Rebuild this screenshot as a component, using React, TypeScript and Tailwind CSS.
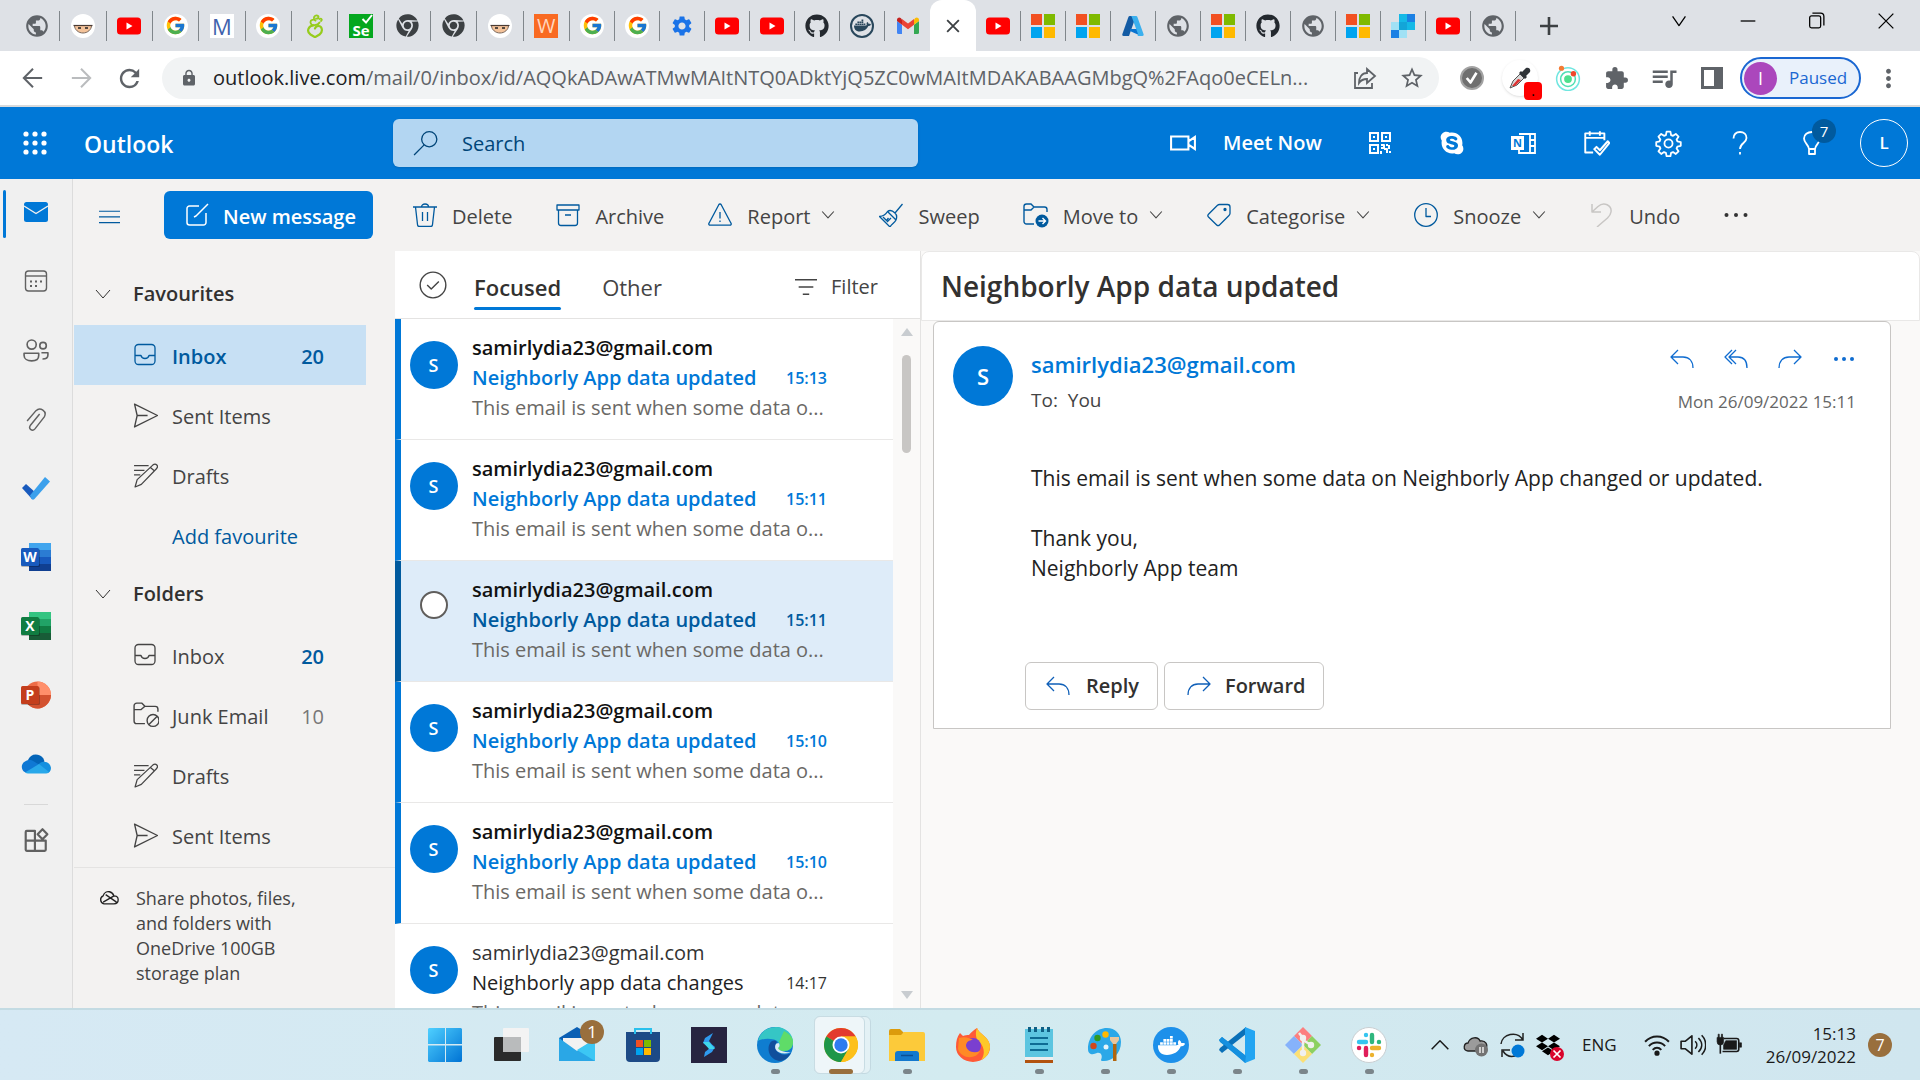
import React from "react";
import { FcGoogle } from "react-icons/fc";
import { FaChrome, FaGithub, FaDocker, FaDropbox, FaSkype } from "react-icons/fa";
import { MdPublic, MdLock, MdSettings, MdExtension, MdQueueMusic, MdMoreVert, MdStarBorder, MdRefresh } from "react-icons/md";

type IconProps = { children: React.ReactNode; className?: string; width?: number };

function Line({ children, className = "size-6", width = 1.2 }: IconProps) {
  return (
    <svg viewBox="0 0 24 24" className={"shrink-0 " + className} fill="none" stroke="currentColor" strokeWidth={width} strokeLinejoin="round" aria-hidden="true">
      {children}
    </svg>
  );
}

/* ---------- favicons ---------- */

const Globe = () => <MdPublic className="size-[26px] text-[#5f6368]" />;

const Ninja = () => (
  <svg viewBox="0 0 24 24" className="size-6">
    <circle cx="12" cy="12" r="12" fill="#fff" />
    <path d="M3.500 11.500h17c0 4.200-4 7.500-8.500 7.500s-8.500-3.300-8.500-7.500z" fill="#f4c39a" stroke="#6b5a50" strokeWidth=".9" />
    <path d="M2.500 11.500h19" stroke="#4a3b33" strokeWidth="1.200" />
    <path d="M7 14h3M14 14h3" stroke="#222" strokeWidth="1.400" />
  </svg>
);

const YouTube = () => (
  <svg viewBox="0 0 24 24" className="size-6">
    <rect y="3.500" width="24" height="17" rx="3.500" fill="#f00" />
    <path d="M9.500 8.500v7l6-3.500z" fill="#fff" />
  </svg>
);

const Google = () => (
  <span className="flex size-6 items-center justify-center rounded-full bg-white">
    <FcGoogle className="size-[21px]" />
  </span>
);

const Sprout = () => (
  <svg viewBox="0 0 24 24" className="size-6" fill="none" stroke="#96cc1c" strokeWidth="2.200" strokeLinecap="round">
    <path d="M10.500 11.500c-5 0-7.500 6-3 9l4.500 2.700 4.500-2.700c4-3 2.500-8.500-1-8.500-2 0-3 1-3.500 2.500" />
    <path d="M16.500 8.500c-1.500 3-8.500 4-9 0-.4-3 3.500-3.500 5-2M11 4.500c-.5-2.500 2.500-4 4-2.500s-.5 3-2 2.500M16.500 5c2-1 3 .8 1.500 2" strokeWidth="1.800" />
  </svg>
);

const Selenium = () => (
  <span className="relative flex size-6 items-end justify-center bg-[#04a71f] font-['Open_Sans',sans-serif] text-[15px] leading-[15px] font-bold text-white">
    Se
    <svg viewBox="0 0 12 10" className="absolute top-0 right-0 h-2.5 w-3">
      <path d="M1.500 5l3.500 3.500L11 1" fill="none" stroke="#fff" strokeWidth="2" />
    </svg>
  </span>
);

const ChromeGrey = () => <FaChrome className="size-[23px] text-[#3c4043]" />;

const LetterM = () => <span className="flex size-6 items-center justify-center bg-white font-['Open_Sans',sans-serif] text-[22px] leading-6 text-[#3f62ad]">M</span>;
const LetterW = () => <span className="flex size-6 items-center justify-center bg-[#f96a22] font-['Open_Sans',sans-serif] text-[20px] leading-6 text-[#ffd7bf]">W</span>;

const Gear = () => <MdSettings className="size-6 text-[#1a73e8]" />;
const GitHub = () => <FaGithub className="size-6 text-[#24292f]" />;

const DockerRound = () => (
  <span className="flex size-6 items-center justify-center rounded-full border-2 border-[#29475c] text-[#29475c]">
    <FaDocker className="size-[17px]" />
  </span>
);

const Gmail = () => (
  <svg viewBox="0 0 24 24" className="size-6">
    <path d="M1 7l5 3.800V20H2.500A1.500 1.500 0 0 1 1 18.500z" fill="#4285f4" />
    <path d="M23 7l-5 3.800V20h3.500a1.500 1.500 0 0 0 1.500-1.500z" fill="#34a853" />
    <path d="M18 5.500v5.300L23 7V5.800c0-2-2.200-3-3.700-1.800z" fill="#fbbc04" />
    <path d="M6 5.500v5.300L1 7V5.800c0-2 2.200-3 3.700-1.800z" fill="#c5221f" />
    <path d="M6 10.800V5l6 4.500L18 5v5.800l-6 4.500z" fill="#ea4335" />
  </svg>
);

const Microsoft = () => (
  <span className="grid size-6 grid-cols-2 gap-0.5">
    <i className="bg-[#f25022]" />
    <i className="bg-[#7fba00]" />
    <i className="bg-[#00a4ef]" />
    <i className="bg-[#ffb900]" />
  </span>
);

const Azure = () => (
  <svg viewBox="0 0 24 24" className="size-6">
    <path d="M8.500 2h6.500L8 22H2.500c-1 0-1.500-.8-1.200-1.700L7.500 2.800z" fill="#135ba4" />
    <path d="M9 15h9l2 7-11-5z" fill="#0a73cf" />
    <path d="M9.500 2h5.600c.6 0 1 .3 1.200.8l6.300 17.500c.3.900-.3 1.700-1.200 1.700H16c.9 0 1.400-.8 1.100-1.700L10.700 2.800A1.200 1.200 0 0 0 9.500 2z" fill="#3bb0ee" />
  </svg>
);

const Pixels = () => (
  <svg viewBox="0 0 24 24" className="size-6">
    <path d="M8 0h8v8H8z" fill="#15b9e6" />
    <path d="M16 0h8v8h-8zM0 16h8v8H0z" fill="#1b80e4" />
    <path d="M0 8h8v8H0zM8 16h8v8H8z" fill="#a0e1f5" />
    <path d="M8 8h8v8H8z" fill="#13a5d8" />
    <path d="M16 8h8v8h-8z" fill="#15b9e6" />
  </svg>
);

const leadTabs = [Globe, Ninja, YouTube, Google, LetterM, Google, Sprout, Selenium, ChromeGrey, ChromeGrey, Ninja, LetterW];
const midTabs = [Google, Google, Gear, YouTube, YouTube, GitHub, DockerRound, Gmail];
const endTabs = [YouTube, Microsoft, Microsoft, Azure, Globe, Microsoft, GitHub, Globe, Microsoft, Pixels, YouTube, Globe];

function Tab({ Icon, wide, bare }: { Icon: React.ComponentType; wide?: boolean; bare?: boolean }) {
  return (
    <button aria-label="Tab" className={"flex h-[30px] items-center justify-center " + (wide ? "flex-1 " : "w-[45px] ") + (bare ? "" : "border-r border-[#80868b]")}>
      <Icon />
    </button>
  );
}

function TabStrip() {
  return (
    <div className="flex h-[51px] shrink-0 items-center bg-[#dee1e6] pl-3.5">
      <div className="flex w-[556px]">
        {leadTabs.map((I, i) => <Tab key={i} Icon={I} wide />)}
      </div>
      {midTabs.map((I, i) => <Tab key={i} Icon={I} bare={i === 7} />)}
      <button aria-label="Close tab" className="flex h-full w-[46px] items-center justify-center rounded-t-xl bg-white text-[#3c4043]">
        <Line className="size-5" width={2.2}><path d="M5 5l14 14M19 5L5 19" /></Line>
      </button>
      {endTabs.map((I, i) => <Tab key={i} Icon={I} />)}
      <button aria-label="New tab" className="flex w-[66px] justify-center text-[#3c4043]">
        <Line className="size-6" width={2.6}><path d="M12 3v18M3 12h18" /></Line>
      </button>
      <div className="ml-auto flex self-start pt-2.5 text-black">
        {[
          <path key="c" d="M5 7l7 10 7-10" />,
          <path key="m" d="M4 12h16" />,
          <path key="r" d="M4 8.500a2 2 0 0 1 2-2h8a2 2 0 0 1 2 2v9a2 2 0 0 1-2 2H6a2 2 0 0 1-2-2zM7 3.500h9a3.500 3.500 0 0 1 3.500 3.500v10" />,
          <path key="x" d="M4 4l16 16M20 4L4 20" />,
        ].map((p, i) => (
          <button key={i} aria-label={["Search tabs", "Minimise", "Restore", "Close window"][i]} className="flex w-[69px] justify-center">
            <Line className="size-[22px]" width={1.4}>{p}</Line>
          </button>
        ))}
      </div>
    </div>
  );
}

function AddressBar() {
  return (
    <div className="flex h-14 shrink-0 items-center border-b-2 border-[#d8dadc] bg-white pl-[9px] text-[#5f6368]">
      <button aria-label="Back" className="flex w-12 justify-center"><Line className="size-[22px]" width={2.200}><path d="M22 12H3M12 2L2 12l10 10" strokeLinejoin="miter" /></Line></button>
      <button aria-label="Forward" className="flex w-12 justify-center text-[#babcbe]"><Line className="size-[22px]" width={2.200}><path d="M2 12h19M12 2l10 10-10 10" strokeLinejoin="miter" /></Line></button>
      <button aria-label="Reload" className="flex w-12 justify-center"><MdRefresh className="size-[29px]" /></button>
      <div className="ml-[9px] flex h-[42px] min-w-0 flex-1 items-center rounded-full bg-[#f1f3f4] pr-3.5 pl-[18px]">
        <MdLock className="size-[18px] shrink-0" />
        <div role="textbox" aria-label="Address" className="ml-[15px] min-w-0 flex-1 text-[20px] whitespace-nowrap">
          <span className="text-[#202124]">outlook.live.com</span>/mail/0/inbox/id/AQQkADAwATMwMAItNTQ0ADktYjQ5ZC0wMAItMDAKABAAGMbgQ%2FAqo0eCELn...
        </div>
        <button aria-label="Share" className="mr-[22px]">
          <Line width={1.800}><path d="M5 7H2v15h17v-5M14 3l8 7-8 7v-4c-4 0-6 1-8 4 0-6 3-10 8-10z" strokeLinejoin="miter" /></Line>
        </button>
        <button aria-label="Bookmark"><MdStarBorder className="size-[26px]" /></button>
      </div>
      <div className="flex items-center pl-[9px]">
        <button aria-label="Checker" className="flex w-12 justify-center">
          <span className="flex size-6 items-center justify-center rounded-full border-2 border-[#a3a3a3] bg-[#6f6f6f] text-white"><Line className="size-[18px]" width={3.500}><path d="M5 12l5 6 8-13" /></Line></span>
        </button>
        <button aria-label="Colour picker" className="relative flex size-12 items-center justify-center">
          <span className="flex size-9 items-center justify-center rounded-full bg-white shadow">
            <svg viewBox="0 0 24 24" className="size-6"><path d="M2 22l3-7 7-7 4 4-7 7z" fill="#d8d8d8" stroke="#555" /><path d="M4 20l6-7 3 1-6 6z" fill="#d33" /><path d="M11 7l6 6 2-2-1-1 4-4c1-3-1-5-4-4l-4 4-1-1z" fill="#2f3337" /></svg>
          </span>
          <span className="absolute right-0.5 bottom-0.5 flex size-[18px] items-center justify-center rounded-sm bg-[#f00] text-[14px] leading-none text-black">.</span>
        </button>
        <button aria-label="Orbit" className="flex w-12 justify-center">
          <svg viewBox="0 0 24 24" className="size-[26px]" fill="none" stroke="#4fdfb4" strokeWidth="1.400"><circle cx="12" cy="13" r="10.500" stroke="#70e6e0" /><circle cx="12" cy="13" r="6.800" /><circle cx="12" cy="13" r="3.600" fill="#4ee08e" stroke="none" /><circle cx="6" cy="3" r="2.400" fill="#f47b35" stroke="none" /><circle cx="17" cy="8" r="2.500" fill="#f0482c" stroke="none" /></svg>
        </button>
        <button aria-label="Extensions" className="flex w-12 justify-center"><MdExtension className="size-[25px]" /></button>
        <button aria-label="Media" className="flex w-12 justify-center"><MdQueueMusic className="size-[30px]" /></button>
        <button aria-label="Side panel" className="flex w-12 justify-center">
          <svg viewBox="0 0 22 22" className="size-[22px]"><path d="M0 0h22v22H0zM3 3v16h10V3z" fill="#5f6368" fillRule="evenodd" /></svg>
        </button>
      </div>
      <button className="ml-1 flex h-[42px] w-[121px] items-center gap-3 rounded-full border-2 border-[#1a67d2] bg-[#e9f1fb] pl-0.5 text-[17px] text-[#1a67d2]">
        <span className="flex size-[33px] items-center justify-center rounded-full bg-[#ab47bc] text-[18px] text-white">I</span>Paused
      </button>
      <button aria-label="Menu" className="flex w-[59px] justify-center pr-[5px]"><MdMoreVert className="size-[29px]" /></button>
    </div>
  );
}

/* ---------- Outlook header ---------- */

function Header() {
  return (
    <header className="flex h-[72px] shrink-0 items-center bg-[#0078d7] text-white">
      <button aria-label="App launcher" className="flex w-[72px] justify-center pr-0.5">
        <svg viewBox="0 0 24 24" className="size-6" fill="#fff">
          {[3, 12, 21].map((y) => [3, 12, 21].map((x) => <circle key={x + "-" + y} cx={x} cy={y} r="2.600" />))}
        </svg>
      </button>
      <span className="w-[321px] pt-0.5 pl-3 text-[23px] font-semibold">Outlook</span>
      <label className="flex h-12 w-[525px] items-center rounded-md bg-[#b3d6f2] pl-5 text-[#004578] shadow">
        <Line width={1.2} className="size-[26px]"><circle cx="15" cy="8.500" r="7" /><path d="M10.300 13.700L1 23" /></Line>
        <input type="search" aria-label="Search" placeholder="Search" className="ml-[23px] min-w-0 flex-1 bg-transparent pt-0.5 text-[20px] outline-none placeholder:text-[#004578]" />
      </label>
      <button className="ml-auto flex items-center gap-[27px] pr-6 text-[20px] font-semibold">
        <Line className="size-[26px]" width={1.9}><path d="M1 6h16v12H1zM17 10.500l6-4v11l-6-4z" strokeLinejoin="miter" /></Line>
        <span className="w-[97px] text-left whitespace-nowrap">Meet Now</span>
      </button>
      <HeaderButton label="QR code">
        <Line width={2}><path d="M2 2h8v8H2zM14 2h8v8h-8zM2 14h8v8H2z" strokeLinejoin="miter" /><path d="M5 6h2M17 6h2M5 18h2M13 14h3v3h-3M18 14h2M21 14v4M16 18h3v4M13 20v3M21 21h2" /></Line>
      </HeaderButton>
      <HeaderButton label="Skype"><FaSkype className="size-[26px]" /></HeaderButton>
      <HeaderButton label="OneNote">
        <svg viewBox="0 0 26 26" className="size-[26px]">
          <path d="M8 4h16v19H8v-4M19 4v19M19 10h5M19 16h5" fill="none" stroke="#fff" strokeWidth="1.800" />
          <rect x="0" y="6" width="13" height="14" fill="#fff" />
          <text x="6.500" y="17" textAnchor="middle" fontSize="11" fontWeight="700" fill="#0078d7">N</text>
        </svg>
      </HeaderButton>
      <HeaderButton label="My Day">
        <Line className="size-[27px]" width={1.7}><path d="M9 20H2V3h17v6M2 7h17M6 1v4M15 1v4" /><path d="M10 17l2-2 3 3 7-8 1.500 1.500L15 22z" /></Line>
      </HeaderButton>
      <HeaderButton label="Settings">
        <Line className="size-[27px]" width={1.600}><circle cx="12" cy="12" r="3.600" /><path d="M10.300 1.500h3.400l.6 3 1.700.7 2.500-1.700 2.400 2.400-1.700 2.500.7 1.700 3 .6v3.400l-3 .6-.7 1.700 1.700 2.500-2.400 2.400-2.500-1.700-1.700.7-.6 3h-3.400l-.6-3-1.700-.7-2.500 1.700-2.400-2.400 1.700-2.500-.7-1.700-3-.6v-3.400l3-.6.7-1.700-1.700-2.500 2.400-2.400L8 5.200l1.700-.7z" /></Line>
      </HeaderButton>
      <HeaderButton label="Help">
        <Line width={1.800}><path d="M5.500 7.500C5.500 3.500 8 1 12 1s6.500 2.500 6.500 6c0 5-6.500 5-6.500 11M12 21v2.500" /></Line>
      </HeaderButton>
      <HeaderButton label="Tips">
        <Line width={1.800}><path d="M9 18c0-4-5-6-5-10.500C4 3.500 7.500 1 12 1s8 2.500 8 6.500c0 4.500-5 6.500-5 10.500zM9 18v5h6v-5" /></Line>
        <span className="absolute top-0 right-3 flex size-6 items-center justify-center rounded-full bg-[#005a9e] text-[15px]">7</span>
      </HeaderButton>
      <button aria-label="Account" className="mr-3 ml-3 flex size-12 items-center justify-center rounded-full border border-white text-[17px] font-semibold">L</button>
    </header>
  );
}

function HeaderButton({ label, children }: { label: string; children: React.ReactNode }) {
  return <button aria-label={label} className="relative flex h-12 w-[72px] items-center justify-center">{children}</button>;
}

/* ---------- app rail ---------- */

function OfficeApp({ letter, shades, dark, round }: { letter: string; shades: string[]; dark: string; round?: boolean }) {
  return (
    <svg viewBox="0 0 30 28" className="h-7 w-[30px]">
      {round ? (
        <>
          <circle cx="16.500" cy="14" r="13.500" fill={shades[0]} />
          <path d="M16.500 .5A13.500 13.500 0 0 1 30 14H16.500z" fill={shades[1]} />
          <path d="M30 14A13.500 13.500 0 0 1 5 21l11.500-7z" fill={shades[2]} />
        </>
      ) : (
        shades.map((c, i) => <rect key={c} x="8" y={i * 7} width="22" height="7" fill={c} />)
      )}
      <rect x="0" y="6" width="19" height="18" rx="1.500" fill="#000" opacity=".25" />
      <rect x="0" y="5" width="18" height="18" rx="1.500" fill={dark} />
      <text x="9" y="19" textAnchor="middle" fontSize="14" fontWeight="700" fill="#fff">{letter}</text>
    </svg>
  );
}

function Rail() {
  const items: [string, React.ReactNode][] = [
    ["Mail", <svg key="m" viewBox="0 0 24 20" className="h-5 w-6"><rect width="24" height="20" rx="2.500" fill="#0078d7" /><path d="M0 4l12 7.500L24 4" fill="none" stroke="#efefef" strokeWidth="1.400" /></svg>],
    ["Calendar", <Line key="c" width={1.400}><rect x="1.500" y="2" width="21" height="20" rx="3" /><path d="M1.500 7h21" /><path d="M6 12.500h2M11 12.500h2M16 12.500h2M6 17h2M11 17h2" strokeWidth="2.200" /></Line>],
    ["People", <Line key="p" width={1.500} className="size-[26px]"><circle cx="8" cy="7" r="4.200" /><circle cx="18.500" cy="8" r="3" /><path d="M1 15h13.500v2c0 3-2.500 5-6.500 5s-7-2-7-5zM17 14.500h6v2c0 2.500-2 3.800-5 3.800" /></Line>],
    ["Files", <Line key="f" width={1.400} className="size-[25px]"><path d="M3 13.500L11.500 3.500c4-4 11 .5 8 6L10.500 21c-2.500 3-6.500 0-4.500-3.200l9-11" /></Line>],
    ["To Do", <svg key="t" viewBox="0 0 30 24" className="h-6 w-[30px]"><path d="M1 12l4-4 10 9-4 6z" fill="#185abd" /><path d="M9 19.500L24 1l5 4.500L13.500 23c-1 1-2 1-3 0z" fill="#3ba0ec" /></svg>],
    ["Word", <OfficeApp key="w" letter="W" dark="#185abd" shades={["#41a5ee", "#2b7cd3", "#185abe", "#103f91"]} />],
    ["Excel", <OfficeApp key="x" letter="X" dark="#107c41" shades={["#33c481", "#21a366", "#107c42", "#185c37"]} />],
    ["PowerPoint", <OfficeApp key="pp" letter="P" dark="#c43e1c" round shades={["#ed6c47", "#ff8f6b", "#d35230"]} />],
    ["OneDrive", <svg key="o" viewBox="0 0 30 20" className="h-5 w-[30px]"><path d="M7 6C9 1 14-1 19 1.500c3 1.500 4 4 4.500 6L12 14z" fill="#0364b8" /><path d="M6 19C0 18 -1 10 4 7.500 8 5 11 6 13 7.500L22 13 8 19z" fill="#0f78d4" /><path d="M18 10c3-4 11-3 12 4 0 3-2 5-4 5l-10-5z" fill="#1490df" /><path d="M4 18.500L18 10l10 8c-1 1-2 1.500-3 1.500H7c-1 0-2-.3-3-1z" fill="#28a8ea" /></svg>],
  ];
  return (
    <nav aria-label="Apps" className="flex w-[73px] shrink-0 flex-col items-center border-r border-[#dcdcdc] bg-[#f0f0f0] text-[#616161]">
      {items.map(([label, icon], i) => (
        <a key={label} href="#" aria-label={label} className="relative flex h-[69px] w-full items-center justify-center pb-[3px]">
          {i === 0 && <span className="absolute top-[11px] left-[3px] h-12 w-[3px] rounded-full bg-[#0078d7]" />}
          {icon}
        </a>
      ))}
      <hr className="mt-1 w-6 border-[#d8d8d8]" />
      <a href="#" aria-label="More apps" className="flex h-[69px] items-center justify-center">
        <Line className="size-[26px]" width={2}><path d="M2.500 4.500a1 1 0 0 1 1-1h7.500v18.500H3.500a1 1 0 0 1-1-1zM2.500 12.500h18.500V21a1 1 0 0 1-1 1h-9M18 2l4.500 4.700L18 11.300l-4.500-4.600z" /></Line>
      </a>
    </nav>
  );
}

/* ---------- folders ---------- */

const InboxIcon = () => <Line width={1.300}><rect x="2" y="1.500" width="20" height="20" rx="3.500" /><path d="M2 12.500h6c.5 2 2 3 4 3s3.500-1 4-3h6" /></Line>;
const SentIcon = () => <Line className="size-[25px]" width={1.300}><path d="M1.500 1l22 11-22 11 2.500-11zM4 12h10" /></Line>;
const DraftIcon = () => <Line className="size-[25px]" width={1.200}><path d="M1 2.500h14M1 7h10M1 11.500h6M2 23l2-7L19 2c3-2.500 6 1 3.500 3.500L8 20.500zM17 4.500l4 3.500" /></Line>;
const JunkIcon = () => <Line className="size-[26px]" width={1.300}><path d="M11 20H3.500A2.500 2.500 0 0 1 1 17.500v-14A2.500 2.500 0 0 1 3.500 1H8l3 3h9.500A2.500 2.500 0 0 1 23 6.500V9M1 7h6.500L11 4" /><circle cx="18.500" cy="17" r="5.500" /><path d="M14.700 20.800l7.600-7.600" /></Line>;

function Section({ title }: { title: string }) {
  return (
    <button className="flex h-[60px] items-center pb-[3px] pl-[21px] text-[20px] font-semibold text-[#323130]">
      <Line className="size-4" width={1.500}><path d="M1.500 6l10.500 12L22.500 6" /></Line>
      <span className="ml-[22px]">{title}</span>
    </button>
  );
}

function Folder({ icon, name, count, active, strong }: { icon?: React.ReactNode; name: string; count?: string; active?: boolean; strong?: boolean }) {
  return (
    <a href="#" className={"mr-[29px] flex h-[60px] items-center pr-[42px] pl-[59px] text-[20px] whitespace-nowrap " + (active ? "bg-[#c7e0f4] font-semibold text-[#005a9e]" : icon ? "text-[#444]" : "text-[#005a9e]")}>
      <span className="flex w-[39px]">{icon}</span>
      <span className="flex-1 pt-[3px]">{name}</span>
      <span className={"pt-[3px] " + (strong ? "font-semibold text-[#005a9e]" : "text-[#777]")}>{count}</span>
    </a>
  );
}

function Folders() {
  return (
    <nav aria-label="Folders" className="flex w-[321px] shrink-0 flex-col bg-[#f3f2f1] pt-3.5">
      <Section title="Favourites" />
      <Folder icon={<InboxIcon />} name="Inbox" count="20" active strong />
      <Folder icon={<SentIcon />} name="Sent Items" />
      <Folder icon={<DraftIcon />} name="Drafts" />
      <Folder name="Add favourite" />
      <Section title="Folders" />
      <Folder icon={<InboxIcon />} name="Inbox" count="20" strong />
      <Folder icon={<JunkIcon />} name="Junk Email" count="10" />
      <Folder icon={<DraftIcon />} name="Drafts" />
      <Folder icon={<SentIcon />} name="Sent Items" />
      <a href="#" className="mt-0.5 flex flex-1 items-start border-t border-[#e4e3e2] pt-[18px] pl-[25px] text-[#444]">
        <Line className="mt-0.5 size-5 text-[#222]" width={1.600}><path d="M6 19a5 5 0 0 1-1-9.500C6 5 10 4 12.500 4.500S17 7 18 9.500c3 0 5 2 5 4.700S21 19 18 19zM5 17l13-7.500M8 8l13 9" /></Line>
        <span className="ml-[17px] w-[180px] text-[18px] leading-[25px]">Share photos, files,<br />and folders with<br />OneDrive 100GB<br />storage plan</span>
      </a>
    </nav>
  );
}

/* ---------- command bar ---------- */

const Chevron = () => <Line className="size-3.5" width={1.800}><path d="M2 6l10 11L22 6" /></Line>;

function Command({ icon, label, menu, off }: { icon: React.ReactNode; label: string; menu?: boolean; off?: boolean }) {
  return (
    <button className="flex items-center whitespace-nowrap">
      <span className={"flex w-6 justify-center " + (off ? "text-[#c8c6c4]" : "text-[#005a9e]")}>{icon}</span>
      <span className="ml-[15px] pt-[3px] text-[20px] text-[#444]">{label}</span>
      {menu && <span className="ml-[11px] text-[#444]"><Chevron /></span>}
    </button>
  );
}

function CommandBar() {
  return (
    <div className="flex h-[72px] shrink-0 items-center bg-[#f3f2f1] pl-[25px]">
      <button aria-label="Toggle folders" className="pt-0.5 text-[#005a9e]"><Line className="size-[21px]" width={1.400}><path d="M0 6h24M0 12.500h24M0 19h24" /></Line></button>
      <button className="ml-11 flex h-12 w-[209px] items-center rounded-md bg-[#0078d7] pl-[21px] text-[20px] font-semibold whitespace-nowrap text-white">
        <Line width={1.500}><path d="M14 3H4.500A2.500 2.500 0 0 0 2 5.500v14A2.500 2.500 0 0 0 4.500 22h14a2.500 2.500 0 0 0 2.500-2.500V10M23 1L11 13l-2 1" /></Line>
        <span className="ml-3.5 pt-[3px]">New message</span>
      </button>
      <div className="ml-10 flex items-center gap-11">
        <Command label="Delete" icon={<Line width={1.300}><path d="M0 4h24M8.500 4c0-4 7-4 7 0M2.500 4l2 17.500A2 2 0 0 0 6.500 23.500h11a2 2 0 0 0 2-2L21.500 4M9.500 9v9M14.500 9v9" /></Line>} />
        <Command label="Archive" icon={<Line width={1.300}><path d="M1 2h22v5H1zM2.500 7v13a2.500 2.500 0 0 0 2.500 2.500h14a2.500 2.500 0 0 0 2.500-2.500V7M9 12h6" /></Line>} />
        <Command label="Report" menu icon={<Line width={1.300}><path d="M10.800 1.700a1.400 1.400 0 0 1 2.400 0l9.800 18.500a1.300 1.300 0 0 1-1.200 2H2.200a1.300 1.300 0 0 1-1.200-2zM12 9v6.500M12 17.500v1.500" /></Line>} />
        <Command label="Sweep" icon={<Line width={1.300}><path d="M23.500 1L16 10M8.500 8.500l8.500 8.500M8.500 8.500c-2 3.500-4 4.500-8 5L11 24c1.500-3 4.500-4 6-7 1.200-3 1-5-1-7s-5-3.500-7.500-1.500zM4 14l3.500 3.500 2-2.500M8 19l4-4" /></Line>} />
        <Command label="Move to" menu icon={<svg viewBox="0 0 26 26" className="size-[26px] shrink-0" fill="none" stroke="currentColor" strokeWidth="1.400"><path d="M11 22H3.500A2.500 2.500 0 0 1 1 19.500v-15A2.500 2.500 0 0 1 3.500 2H8l3 3h10.500A2.500 2.500 0 0 1 24 7.500V10M1 8h7l3-3" /><circle cx="19" cy="19" r="6.500" fill="currentColor" stroke="none" /><path d="M15.500 19h6.500M19.500 16l3 3-3 3" stroke="#fff" /></svg>} />
        <Command label="Categorise" menu icon={<Line width={1.300}><path d="M12.500 1.500h8A2.500 2.500 0 0 1 23 4v6.500a3 3 0 0 1-1 2L12.500 22a2 2 0 0 1-2.800 0L1.500 14a2 2 0 0 1 0-2.800L10.500 2.300a3 3 0 0 1 2-.8z" /><circle cx="18" cy="6.500" r="1" fill="currentColor" /></Line>} />
        <Command label="Snooze" menu icon={<Line width={1.300}><circle cx="12" cy="12" r="11.300" /><path d="M12 5v8.500h5" /></Line>} />
        <Command label="Undo" off icon={<Line width={1.500}><path d="M2 1v8h9M2.500 8.500L8 3.500c6-5.500 14-1 13 5.500-.3 2.500-1.500 4-3.500 6L7 24" /></Line>} />
        <button aria-label="More actions" className="text-[#333]"><Line><g fill="currentColor" stroke="none"><circle cx="2.500" cy="12" r="2" /><circle cx="12" cy="12" r="2" /><circle cx="21.500" cy="12" r="2" /></g></Line></button>
      </div>
    </div>
  );
}

/* ---------- message list ---------- */

type Mail = { time: string; state: "unread" | "selected" | "read"; subject: string; preview: string };
const SUBJECT = "Neighborly App data updated";
const PREVIEW = "This email is sent when some data o...";
const mails: Mail[] = [
  { time: "15:13", state: "unread", subject: SUBJECT, preview: PREVIEW },
  { time: "15:11", state: "unread", subject: SUBJECT, preview: PREVIEW },
  { time: "15:11", state: "selected", subject: SUBJECT, preview: PREVIEW },
  { time: "15:10", state: "unread", subject: SUBJECT, preview: PREVIEW },
  { time: "15:10", state: "unread", subject: SUBJECT, preview: PREVIEW },
  { time: "14:17", state: "read", subject: "Neighborly app data changes", preview: PREVIEW },
];

function MailRow({ mail }: { mail: Mail }) {
  const { state } = mail;
  const selected = state === "selected";
  const unread = state !== "read";
  return (
    <li className={"flex h-[121px] shrink-0 border-b border-[#e9e8e7] border-l-[6px] pt-3.5 " + (selected ? "border-l-[#005a9e] bg-[#deecf9]" : unread ? "border-l-[#0078d7] bg-white" : "border-l-white bg-white")}>
      <div className="flex w-[71px] justify-center pt-2 pr-1.5">
        {selected ? (
          <input type="checkbox" aria-label="Select message" className="mt-2 size-7 appearance-none rounded-full border-2 border-[#605e5c] bg-white" />
        ) : (
          <span className="flex size-12 items-center justify-center rounded-full bg-[#0078d7] text-[18px] font-semibold text-white">S</span>
        )}
      </div>
      <div className="min-w-0 flex-1 pr-[66px] text-[20px] leading-[30px] whitespace-nowrap">
        <div className={unread ? "font-semibold text-[#111]" : "text-[#333]"}>samirlydia23@gmail.com</div>
        <div className="flex items-center justify-between">
          <span className={unread ? (selected ? "font-semibold text-[#005a9e]" : "font-semibold text-[#0078d7]") : "text-[#222]"}>{mail.subject}</span>
          <span className={"text-[16px] " + (unread ? (selected ? "font-semibold text-[#005a9e]" : "font-semibold text-[#0078d7]") : "text-[#333]")}>{mail.time}</span>
        </div>
        <div className="text-[#6b6966]">{mail.preview}</div>
      </div>
    </li>
  );
}

function MessageList() {
  return (
    <section aria-label="Messages" className="flex w-[526px] shrink-0 flex-col border-r border-[#e4e3e2] bg-white">
      <div className="flex h-[68px] shrink-0 items-center border-b border-[#e4e3e2] pr-[42px] pl-6 text-[22px] text-[#444]">
        <button aria-label="Select all"><Line className="size-7" width={1.200}><circle cx="12" cy="12" r="11" /><path d="M7 12l3.500 3.500L17 9" /></Line></button>
        <button className="relative ml-[27px] flex h-full items-center pt-[5px] font-semibold text-[#323130]">Focused<span className="absolute inset-x-0 bottom-2 h-[3px] rounded-full bg-[#0078d7]" /></button>
        <button className="ml-[41px] pt-[5px]">Other</button>
        <button className="ml-auto flex items-center gap-3.5 pt-[5px] text-[20px]"><Line className="size-[22px]" width={1.600}><path d="M0 4h24M4 12h16M8.500 20h7" /></Line>Filter</button>
      </div>
      <div className="flex min-h-0 flex-1">
        <ul className="flex flex-1 flex-col overflow-hidden">
          {mails.map((m, i) => <MailRow key={i} mail={m} />)}
        </ul>
        <div className="flex w-[27px] flex-col items-center justify-between bg-[#faf9f8] py-[9px] text-[#c8ccd0]">
          <div className="flex flex-col items-center gap-[19px]">
            <svg viewBox="0 0 12 8" className="h-2 w-3"><path d="M6 0l6 8H0z" fill="currentColor" /></svg>
            <span className="h-[98px] w-[9px] rounded-full bg-[#c8c6c4]" />
          </div>
          <svg viewBox="0 0 12 8" className="h-2 w-3"><path d="M0 0h12L6 8z" fill="currentColor" /></svg>
        </div>
      </div>
    </section>
  );
}

/* ---------- reading pane ---------- */

const ReplyIcon = () => <Line width={1.300}><path d="M8 3L1 10l7 7M1 10h12c6 0 10 4 10 11" /></Line>;
const ReplyAllIcon = () => <Line width={1.300}><path d="M8 3L1 10l7 7M12 3l-7 7 7 7M5 10h9c6 0 9 4 9 11" /></Line>;
const ForwardIcon = () => <Line width={1.300}><path d="M16 3l7 7-7 7M23 10H11C5 10 1 14 1 21" /></Line>;

function ReadingPane() {
  return (
    <main className="flex min-w-0 flex-1 flex-col bg-[#faf9f8]">
      <h1 className="flex h-[70px] shrink-0 items-center rounded-t-lg border border-[#e9e8e7] bg-white pl-[19px] text-[28px] font-semibold text-[#323130]">{SUBJECT}</h1>
      <article className="mr-[29px] ml-3 rounded-t-md border border-[#c8c6c4] bg-white pr-[34px] pb-[18px] pl-[19px]">
        <div className="flex pt-6">
          <span className="flex size-[60px] shrink-0 items-center justify-center rounded-full bg-[#0078d7] text-[22px] font-semibold text-white">S</span>
          <div className="ml-[18px] flex-1">
            <div className="text-[22px] leading-9 font-semibold text-[#0078d7]">samirlydia23@gmail.com</div>
            <div className="text-[19px] leading-9 text-[#444]">To:&nbsp; You</div>
          </div>
          <div className="flex flex-col items-end">
            <div className="flex h-[26px] items-center gap-[30px] text-[#0f6cd0]">
              <button aria-label="Reply"><ReplyIcon /></button>
              <button aria-label="Reply all"><ReplyAllIcon /></button>
              <button aria-label="Forward"><ForwardIcon /></button>
              <button aria-label="More"><Line><g fill="currentColor" stroke="none"><circle cx="4" cy="12" r="2" /><circle cx="12" cy="12" r="2" /><circle cx="20" cy="12" r="2" /></g></Line></button>
            </div>
            <div className="mt-4 text-[17px] leading-[27px] text-[#666]">Mon 26/09/2022 15:11</div>
          </div>
        </div>
        <div className="mt-[45px] ml-[78px] text-[21px] leading-[30px] text-[#222]">
          <p>This email is sent when some data on Neighborly App changed or updated.</p>
          <p className="mt-[30px]">Thank you,</p>
          <p>Neighborly App team</p>
        </div>
        <div className="mt-[79px] ml-[72px] flex gap-1.5 text-[20px] font-semibold text-[#323130]">
          <button className="flex h-12 w-[133px] items-center gap-4 rounded-md border border-[#c8c6c4] pl-5"><span className="text-[#0f5fb8]"><ReplyIcon /></span>Reply</button>
          <button className="flex h-12 w-[160px] items-center gap-3.5 rounded-md border border-[#c8c6c4] pl-[22px]"><span className="text-[#0f5fb8]"><ForwardIcon /></span>Forward</button>
        </div>
      </article>
    </main>
  );
}

/* ---------- Windows taskbar ---------- */

function Art({ children }: { children: React.ReactNode }) {
  return <svg viewBox="0 0 36 36" className="size-9">{children}</svg>;
}

const ChromeArt = () => (
  <Art>
    <circle cx="18" cy="18" r="17" fill="#fbbc04" />
    <path d="M18 18L3.300 9.500A17 17 0 0 1 32.700 9.500H18z" fill="#e33b2e" />
    <path d="M3.300 9.500A17 17 0 0 0 18 35l7.400-12.700L18 18z" fill="#1e9648" />
    <path d="M18 9.500h14.700A17 17 0 0 1 18 35l7.400-12.700z" fill="#fdc01a" />
    <circle cx="18" cy="18" r="8.500" fill="#fff" />
    <circle cx="18" cy="18" r="6.700" fill="#2f7bf0" />
  </Art>
);

const apps: { name: string; open?: boolean; art: React.ReactNode }[] = [
  { name: "Start", art: <Art><defs><linearGradient id="win" x1="0" y1="0" x2="1" y2="1"><stop offset="0" stopColor="#4fd0ff" /><stop offset="1" stopColor="#0073d4" /></linearGradient></defs><path d="M2 1h16v16H1V2zM19 1h15l1 1v15H19zM1 18.500h17V35H2l-1-1zM19 18.500h16V34l-1 1H19z" fill="url(#win)" /></Art> },
  { name: "Task view", art: <Art><rect x="1" y="10" width="27" height="24" rx="1" fill="#2b2b2b" /><rect x="10" y="1" width="26" height="24" rx="1" fill="#f3f3f3" /><path d="M10 10h18v15H10z" fill="#b9bbbc" /></Art> },
  { name: "Mail", art: <Art><path d="M0 11L18 0l18 11v4H0z" fill="#0a5fb4" /><path d="M4 11h28v12H4z" fill="#f2f2f2" /><path d="M0 11l18 13L36 12v22H0z" fill="#2aa7e6" /><path d="M36 12L18 23l18 11z" fill="#3cc7f4" /></Art> },
  { name: "Store", art: <Art><path d="M1 5h34v26a4 4 0 0 1-4 4H5a4 4 0 0 1-4-4z" fill="#1d4a86" /><path d="M10 7V2h16v5" fill="none" stroke="#29c0ec" strokeWidth="2" /><path d="M11 13h7v7h-7z" fill="#f25022" /><path d="M19 13h7v7h-7z" fill="#7fba00" /><path d="M11 21h7v7h-7z" fill="#00a4ef" /><path d="M19 21h7v7h-7z" fill="#ffb900" /></Art> },
  { name: "Shadow", art: <Art><path d="M0 0h36v36H0z" fill="#272440" /><path d="M22 6l-8 5-2 5 6 5h6l-6-7zM13 30l8-5 3-5-6-5h-4l5 6-5 4z" fill="#2f9aef" /><path d="M12 15h6l6 7h-6z" fill="#3fd6ea" /></Art> },
  { name: "Edge", open: true, art: <Art><circle cx="18" cy="18" r="18" fill="#0f7dd0" /><path d="M1 14C3 5 10 0 19 0c10 0 17 7 17 15 0 6-4 9-9 9-3 0-6-1-6-3 2-1 2-7-4-8.500C11 11 4 12 1 14z" fill="#35c6c5" /><path d="M27 4c6 3 9 7 9 11 0 6-4 9-9 9-3 0-6-1-6-3 2-1 3-4 1-6z" fill="#5fdc68" /><path d="M15 14c-5 3-6 17 7 20 5 0 9-3 12-8-5 3-12 2-15-3-1.500-3-1-6 1-8-1-1.500-3-2-5-1z" fill="#114f9c" /><path d="M21.500 16c-3 0-4 3-3 6 2 4 8 6 15 3.500C31 25 22 25 21 21c2-1 2-4 .5-5z" fill="#dcedf4" /></Art> },
  { name: "Chrome", open: true, art: <ChromeArt /> },
  { name: "Explorer", open: true, art: <Art><path d="M0 4a2 2 0 0 1 2-2h9l4 4h19v6H0z" fill="#dc9b0c" /><path d="M0 8h12l3-3h19a2 2 0 0 1 2 2v27H0z" fill="#fcca3a" /><path d="M6 34V27a3 3 0 0 1 3-3h18a3 3 0 0 1 3 3v7z" fill="#1379ce" /><path d="M12 28.500h12" stroke="#0b4f94" strokeWidth="1.500" /></Art> },
  { name: "Firefox", art: <Art><path d="M5 6l3 3c2-1 4-1 6-1 2-3 5-5 8-7 1 3 4 5 6 7 5 4 7 8 7 12a17 15 0 0 1-34 0C1 14 2 10 5 6z" fill="#ff5a36" /><path d="M22 1c1 3 4 5 6 7 5 4 7 8 7 12a15 15 0 0 1-9 13c5-6 3-15-3-19-2-3-3-8-1-13z" fill="#ffc829" /><circle cx="18" cy="19" r="8" fill="#7a3fd0" /><path d="M4 11c6-2 11 0 14 2-4 0-7 2-7 6 1 5 7 8 14 5-4 9-19 8-22-2z" fill="#ff8a26" /></Art> },
  { name: "Notepad", open: true, art: <Art><path d="M4 31h28v5H4z" fill="#b2530f" /><path d="M4 30h28v3H4z" fill="#eee" /><path d="M4 2h28v28H4z" fill="#5cc5e0" /><path d="M9 11h18M9 17h18M9 23h18" stroke="#0e6c94" strokeWidth="2" /><path d="M8.500 0v5M14.500 0v5M21.500 0v5M27.500 0v5" stroke="#0e5f85" strokeWidth="3" /></Art> },
  { name: "Paint", open: true, art: <Art><path d="M14 33c2-4 0-8-4-7-4 2-9 2-9-4C1 10 9 1 20 1c8 0 14 6 14 14 0 12-9 19-17 19-2 0-3 0-3-1z" fill="#2ba8e8" /><circle cx="6.500" cy="19" r="3.200" fill="#d0471c" /><circle cx="10.500" cy="11" r="3.200" fill="#2f9a21" /><circle cx="18.500" cy="7.500" r="3.200" fill="#ffb900" /><circle cx="19" cy="20" r="2.500" fill="#e6f4fa" /><path d="M23 10h9v3l-3 4h-3l-3-4z" fill="#e9c69d" /><path d="M26 17h3.500v17H26z" fill="#b2660f" /></Art> },
  { name: "Docker", open: true, art: <span className="flex size-9 items-center justify-center rounded-full bg-[#1d90ea] text-white"><FaDocker className="size-[27px]" /></span> },
  { name: "VS Code", open: true, art: <Art><path d="M0 13l3-3 24 19v7L1 15z" fill="#0b8ad6" /><path d="M0 23l3 3L27 7V0L1 21z" fill="#0a70b8" /><path d="M26 0l10 4v28l-10 4z" fill="#23a5f2" /><path d="M0 13l3-3 24 19-1 7z" fill="#1590df" /></Art> },
  { name: "Git", open: true, art: <Art><path d="M18 0l9 9-9 9-9-9z" fill="#fc7f7f" /><path d="M9 9l9 9-9 9-9-9z" fill="#86b2fb" /><path d="M27 9l9 9-9 9-9-9z" fill="#8dd061" /><path d="M18 18l9 9-9 9-9-9z" fill="#fbdf75" /><path d="M14 6l4 5v15M18 13l8 5" fill="none" stroke="#f0f0ee" strokeWidth="2.500" /><g fill="#f0f0ee"><circle cx="18" cy="11" r="3.200" /><circle cx="26" cy="18" r="3.200" /><circle cx="18" cy="26" r="3.200" /></g></Art> },
  { name: "Slack", open: true, art: <Art><circle cx="18" cy="18" r="17.500" fill="#fff" stroke="#c9ced1" /><g strokeWidth="4.400" strokeLinecap="round"><path d="M15 8v.1M8 15h7" stroke="#36c5f0" /><path d="M21 8v7M28 15h-.1" stroke="#2eb67d" /><path d="M8 21h.1M15 21v7" stroke="#e01e5a" /><path d="M21 21h7M21 28v-.1" stroke="#ecb22e" /></g></Art> },
];

function Taskbar() {
  return (
    <footer className="flex h-[72px] shrink-0 items-center border-t-2 border-[#c3dbe3] bg-linear-to-r from-[#d6e9f4] via-[#d3ebf0] to-[#d0e6ef] pl-3 text-[#1a1a1a]">
      <div className="ml-[400px] flex h-full items-center">
        {apps.map((a) => (
          <button key={a.name} aria-label={a.name} className="relative flex h-full w-[66px] items-center justify-center">
            {a.name === "Chrome" && <span className="absolute top-1.5 left-1.5 h-[58px] w-[57px] rounded-md border border-[#c3d9e1] bg-[#e3f1f5]" />}
            {a.name === "Chrome" && <span className="absolute top-1.5 left-1.5 h-[58px] w-[51px] rounded-md border border-[#c8dce3] bg-[#eef6f9]" />}
            <span className="relative">{a.art}</span>
            {a.name === "Mail" && <span className="absolute top-2.5 right-1.5 flex size-6 items-center justify-center rounded-full bg-[#996f3d] text-[17px] text-white">1</span>}
            {a.open && <span className={"absolute bottom-1.5 h-[5px] rounded-full " + (a.name === "Chrome" ? "w-6 bg-[#996f3d]" : "w-[9px] bg-[#7b858a]")} />}
          </button>
        ))}
      </div>
      <div className="ml-auto flex items-center pr-7">
        <button aria-label="Hidden icons" className="flex w-9 justify-center"><Line className="size-5" width={1.800}><path d="M2 17L12 7l10 10" /></Line></button>
        <button aria-label="Cloud storage" className="flex w-9 justify-center">
          <svg viewBox="0 0 26 24" className="h-6 w-[26px]"><path d="M5 18C-1 17 1 10 5 10 7 4 15 3 17 8c6-1 8 4 6 8l-4 2z" fill="#9b9b9b" stroke="#222" strokeWidth="1.300" /><circle cx="18.500" cy="17" r="6.500" fill="#737373" /><path d="M17 14v6M20 14v6" stroke="#fff" strokeWidth="1.300" /></svg>
        </button>
        <button aria-label="Sync" className="flex w-9 justify-center">
          <svg viewBox="0 0 26 26" className="size-[26px]"><path d="M2 12C3 2 18-2 24 8M24 1v7h-8M3 25v-7h8M4 19c3 5 8 6 12 5" fill="none" stroke="#222" strokeWidth="1.500" /><circle cx="19" cy="19" r="6.500" fill="#0078d7" /></svg>
        </button>
        <button aria-label="Dropbox" className="relative flex w-9 justify-center">
          <FaDropbox className="size-6 text-black" />
          <span className="absolute right-0.5 -bottom-1 flex size-[14px] items-center justify-center rounded-full bg-[#d9042b] text-white"><Line className="size-3" width={3.500}><path d="M5 5l14 14M19 5L5 19" /></Line></span>
        </button>
        <button className="ml-4 w-[58px] text-left text-[17px]">ENG</button>
        <button aria-label="Network, volume and battery" className="ml-1 flex items-center gap-2.5">
          <Line className="size-[26px]" width={1.800}><path d="M1 9c6-6.500 16-6.500 22 0M4.500 13c4-4.500 11-4.500 15 0M8 16.500c2.500-2.500 5.500-2.500 8 0" /><circle cx="12" cy="19.500" r="1.500" fill="currentColor" /></Line>
          <Line className="size-[26px]" width={1.500}><path d="M1 8.500h4l6-5v17l-6-5H1zM14 8.500c2 2 2 5 0 7M17 5.500c4 4 4 9 0 13M20 3c5 5 5 13 0 18" /></Line>
          <Line className="size-[26px]" width={1.500}><path d="M7 6h12a2 2 0 0 1 2 2v8a2 2 0 0 1-2 2H6" /><path d="M9 8h10v8H7v-4zM21.500 10h2v4h-2zM1 5h6v4a3 3 0 0 1-6 0zM2 2h1v3H2zM5 2h1v3H5z" fill="currentColor" strokeWidth=".6" /><path d="M4 11v9" /></Line>
        </button>
        <div className="ml-4 w-[98px] text-right text-[17px] leading-[23px]">15:13<br />26/09/2022</div>
        <span className="ml-3 flex size-6 items-center justify-center rounded-full bg-[#996f3d] text-[16px] text-white">7</span>
      </div>
    </footer>
  );
}

export default function App() {
  return (
    <div className="flex h-screen flex-col overflow-hidden bg-white font-['Open_Sans','Noto_Sans',sans-serif]">
      <TabStrip />
      <AddressBar />
      <Header />
      <div className="flex min-h-0 flex-1">
        <Rail />
        <div className="flex min-w-0 flex-1 flex-col bg-[#f3f2f1] pl-px">
          <CommandBar />
          <div className="flex min-h-0 flex-1">
            <Folders />
            <MessageList />
            <ReadingPane />
          </div>
        </div>
      </div>
      <Taskbar />
    </div>
  );
}
